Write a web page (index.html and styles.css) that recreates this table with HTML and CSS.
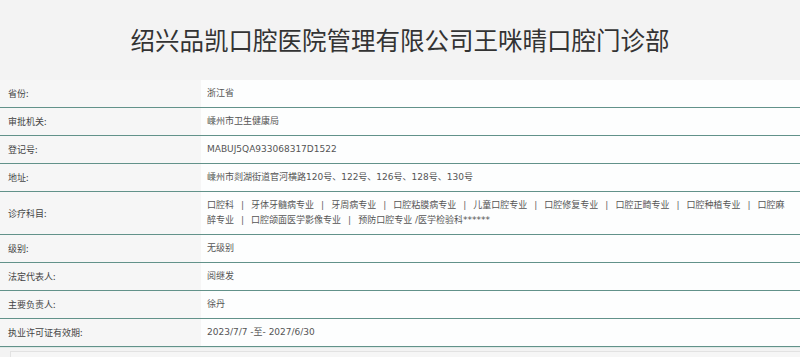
FILE: index.html
```html
<!DOCTYPE html>
<html lang="zh">
<head>
<meta charset="utf-8">
<link rel="stylesheet" href="styles.css">
</head>
<body>
<h1 class="title">绍兴品凯口腔医院管理有限公司王咪晴口腔门诊部</h1>
<div class="table">
  <div class="row"><div class="label">省份:</div><div class="value">浙江省</div></div>
  <div class="row"><div class="label">审批机关:</div><div class="value">嵊州市卫生健康局</div></div>
  <div class="row"><div class="label">登记号:</div><div class="value">MABUJ5QA933068317D1522</div></div>
  <div class="row"><div class="label">地址:</div><div class="value">嵊州市剡湖街道官河横路120号、122号、126号、128号、130号</div></div>
  <div class="row"><div class="label">诊疗科目:</div><div class="value">口腔科<span class="sep">|</span>牙体牙髓病专业<span class="sep">|</span>牙周病专业<span class="sep">|</span>口腔粘膜病专业<span class="sep">|</span>儿童口腔专业<span class="sep">|</span>口腔修复专业<span class="sep">|</span>口腔正畸专业<span class="sep">|</span>口腔种植专业<span class="sep">|</span>口腔麻<br>醉专业<span class="sep">|</span>口腔颌面医学影像专业<span class="sep">|</span>预防口腔专业 /医学检验科******</div></div>
  <div class="row"><div class="label">级别:</div><div class="value">无级别</div></div>
  <div class="row"><div class="label">法定代表人:</div><div class="value">阅继发</div></div>
  <div class="row"><div class="label">主要负责人:</div><div class="value">徐丹</div></div>
  <div class="row"><div class="label">执业许可证有效期:</div><div class="value">2023/7/7 -至- 2027/6/30</div></div>
</div>
<div class="footer-box"></div>
</body>
</html>
```

FILE: styles.css
```css
html, body {
  margin: 0;
  padding: 0;
  background: #f3f3f3;
  font-family: "Noto Sans CJK SC", "Noto Sans", sans-serif;
  color: #555;
}
.title {
  margin: 0;
  height: 80px;
  line-height: 80px;
  text-align: center;
  font-size: 24.5px;
  font-weight: normal;
  color: #333;
}
.table {
  display: flex;
  flex-direction: column;
}
.row {
  display: flex;
  border-bottom: 1px solid #62928a;
  box-shadow: 0 1px 0 #dfeae7;
}
.label {
  width: 193px;
  flex: none;
  padding: 6px 0 6px 8px;
  font-size: 9px;
  line-height: 15px;
  color: #444;
  background: #f6f6f6;
  display: flex;
  align-items: center;
}
.value {
  flex: 1;
  padding: 6px 4px 6px 6px;
  font-family: "DejaVu Sans", "Noto Sans CJK SC", sans-serif;
  font-size: 9px;
  line-height: 15px;
  color: #555;
  background: #fdfefe;
}
.sep {
  margin: 0 7px;
  color: #666;
}
.footer-box {
  margin: 4px 0 0 10px;
  height: 10px;
  border-top: 1px solid #e2e2e2;
  border-left: 1px solid #e2e2e2;
  background: #f6f6f6;
}
```
